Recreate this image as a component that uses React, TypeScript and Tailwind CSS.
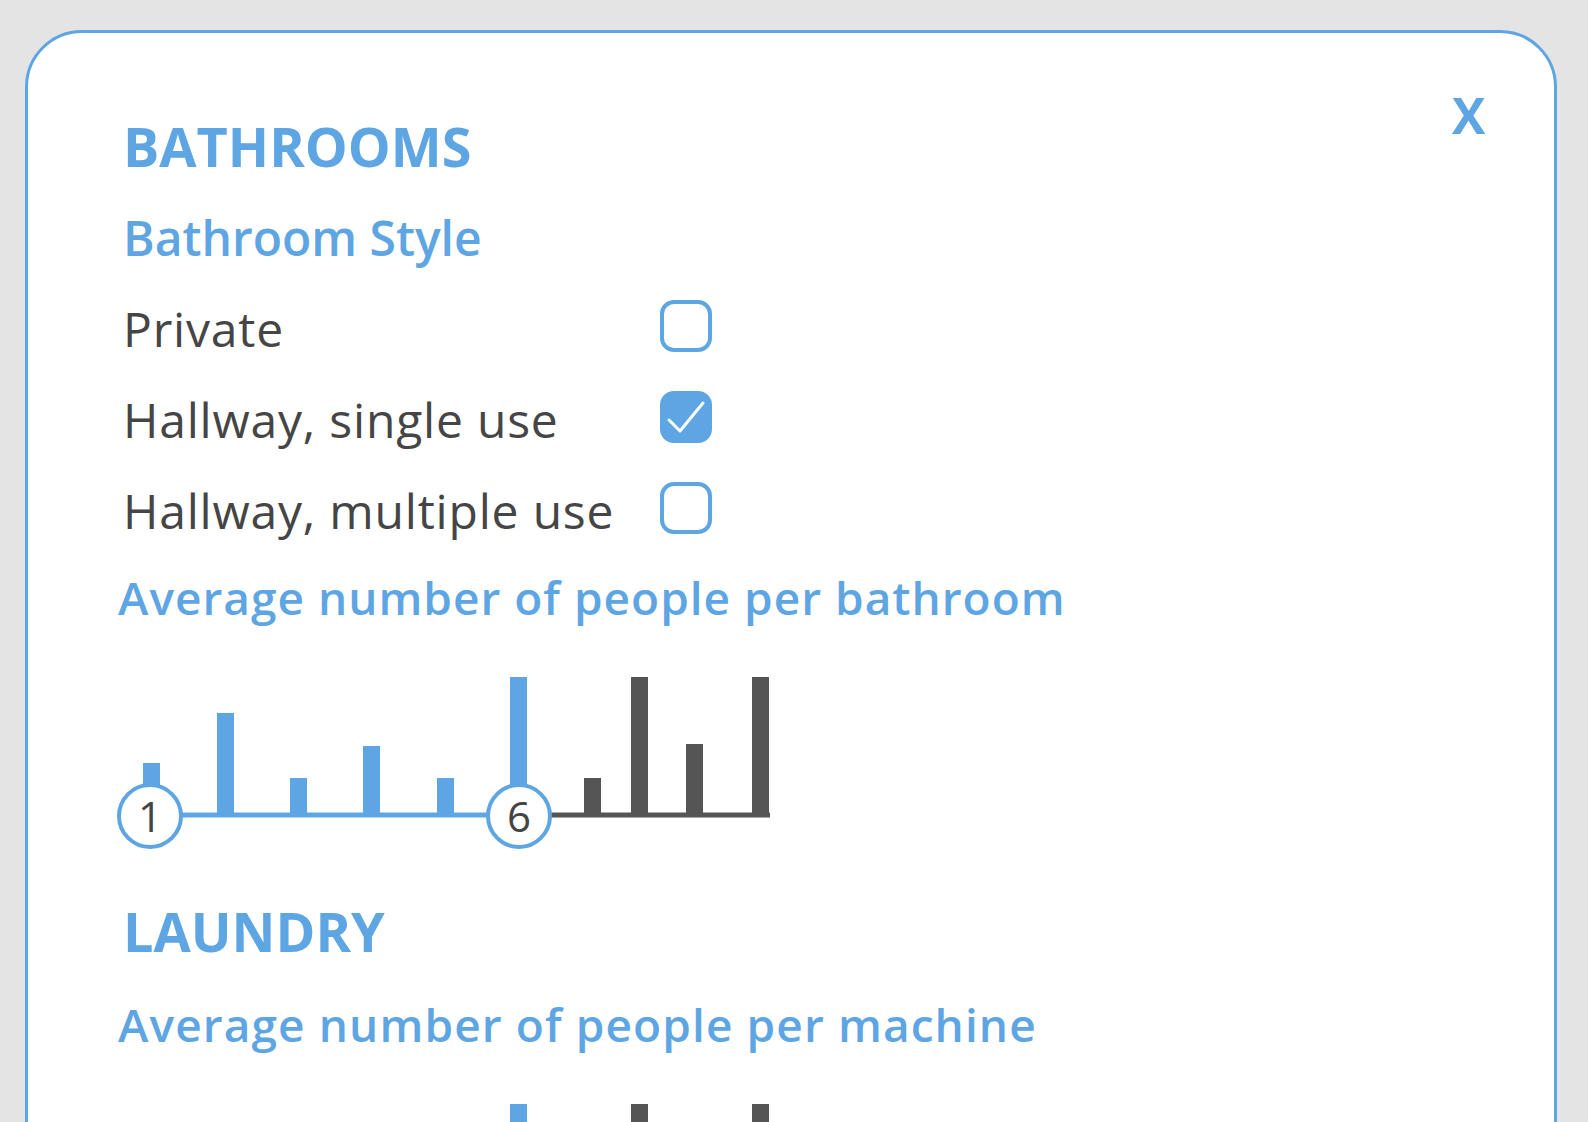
import React from "react";

const BLUE = "#5ea5e3";
const DARK = "#555555";

type Bar = { x: number; top: number; on: boolean };

// bar positions in page pixels, the chart's viewBox maps them 1:1
const bars: Bar[] = [
  { x: 143, top: 763, on: true },
  { x: 217, top: 713, on: true },
  { x: 290, top: 778, on: true },
  { x: 363, top: 746, on: true },
  { x: 437, top: 778, on: true },
  { x: 510, top: 677, on: true },
  { x: 584, top: 778, on: false },
  { x: 631, top: 677, on: false },
  { x: 686, top: 744, on: false },
  { x: 752, top: 677, on: false },
];

function RangeChart({ min, max }: { min: number; max: number }) {
  return (
    <svg
      width={680}
      height={195}
      viewBox="110 660 680 195"
      className="block -ml-[13px]"
    >
      {bars.map((b, i) => (
        <rect key={i} x={b.x} y={b.top} width={17} height={817 - b.top} fill={b.on ? BLUE : DARK} />
      ))}
      <rect x={150} y={812.5} width={369} height={5} fill={BLUE} />
      <rect x={519} y={812.5} width={251} height={5} fill={DARK} />
      {[
        { cx: 150, label: min },
        { cx: 519, label: max },
      ].map((c) => (
        <g key={c.cx}>
          <circle cx={c.cx} cy={816} r={31} fill="white" stroke={BLUE} strokeWidth={4} />
          <text
            x={c.cx}
            y={832}
            textAnchor="middle"
            fontSize={42}
            fill="#444444"
            style={{ fontFamily: "'Open Sans', 'Liberation Sans', sans-serif" }}
          >
            {c.label}
          </text>
        </g>
      ))}
    </svg>
  );
}

function Checkbox({ checked }: { checked?: boolean }) {
  return (
    <span
      className={
        checked
          ? "mt-[20px] grid h-[52px] w-[52px] place-items-center rounded-[14px] border-4 border-[#5ea5e3] bg-[#5ea5e3]"
          : "mt-[20px] block h-[52px] w-[52px] rounded-[14px] border-4 border-[#5ea5e3] bg-white"
      }
    >
      {checked && (
        <svg width="44" height="44" viewBox="0 0 44 44" fill="none">
          <path d="M5 25 L16 36 L39 8" stroke="white" strokeWidth="3" strokeLinecap="round" strokeLinejoin="round" />
        </svg>
      )}
    </span>
  );
}

function OptionRow({ label, checked }: { label: string; checked?: boolean }) {
  return (
    <div className="flex h-[91px] items-start">
      <span className="mt-[21px] w-[537px] text-[48px] leading-[56px] tracking-[0.8px] text-[#454545]">{label}</span>
      <Checkbox checked={checked} />
    </div>
  );
}

export default function App() {
  return (
    <div
      className="h-[1122px] overflow-hidden bg-[#e4e4e4] pl-[25px] pr-[31px] pt-[30px]"
      style={{ fontFamily: "'Open Sans', 'Liberation Sans', sans-serif" }}
    >
      <div className="relative rounded-[57px] border-[3px] border-[#5ea5e3] bg-white pb-[80px] pl-[95px] pt-[83px]">
        <button className="absolute left-[1424px] top-[57px] text-[50px] font-bold leading-[50px] text-[#5ea5e3]">
          X
        </button>

        <h2 className="text-[54px] font-bold leading-[60px] text-[#5ea5e3]">BATHROOMS</h2>
        <h3 className="mt-[34px] text-[48px] font-semibold leading-[56px] text-[#5ea5e3]">Bathroom Style</h3>

        <div className="mt-[14px]">
          <OptionRow label="Private" />
          <OptionRow label="Hallway, single use" checked />
          <OptionRow label="Hallway, multiple use" />
        </div>

        <h3 className="-ml-[5px] mt-[17px] text-[46px] font-semibold leading-[54px] tracking-[1px] text-[#5ea5e3]">
          Average number of people per bathroom
        </h3>
        <div className="mt-[36px]">
          <RangeChart min={1} max={6} />
        </div>

        <h2 className="mt-[46px] text-[54px] font-bold leading-[60px] text-[#5ea5e3]">LAUNDRY</h2>
        <h3 className="-ml-[5px] mt-[36px] text-[46px] font-semibold leading-[54px] tracking-[1.1px] text-[#5ea5e3]">
          Average number of people per machine
        </h3>
        <div className="mt-[36px]">
          <RangeChart min={1} max={6} />
        </div>
      </div>
    </div>
  );
}
